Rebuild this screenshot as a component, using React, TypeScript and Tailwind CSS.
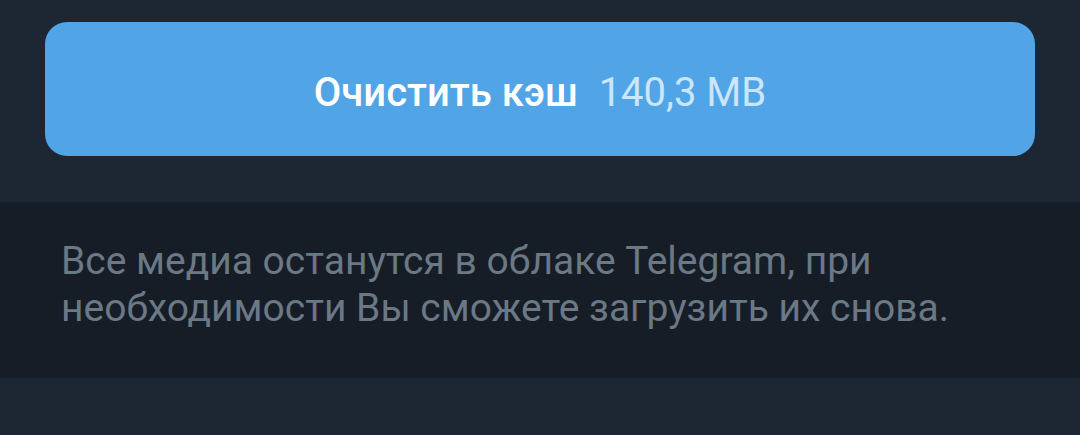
import React from "react";

export default function App() {
  return (
    <div className="w-[1080px] h-[435px] bg-[#1d2733] overflow-hidden" style={{ fontFamily: "Roboto, 'Noto Sans', sans-serif" }}>
      <div className="px-[45px] pt-[22px] pb-[46px]">
        <button className="w-full h-[134px] rounded-[22px] bg-[#51a5e7] flex items-center justify-center pt-[6px]">
          <span className="text-[40px] leading-[47px] font-medium text-white">Очистить кэш</span>
          <span className="ml-[21px] text-[40px] leading-[47px] font-normal text-[#cbe6fb]">140,3 MB</span>
        </button>
      </div>
      <div className="bg-[#161d26] pl-[61px] pr-[40px] pt-[36px] pb-[46px]">
        <p className="text-[39px] leading-[47px] text-[#6b7885]">
          Все медиа останутся в облаке Telegram, при<br />
          необходимости Вы сможете загрузить их снова.
        </p>
      </div>
    </div>
  );
}
